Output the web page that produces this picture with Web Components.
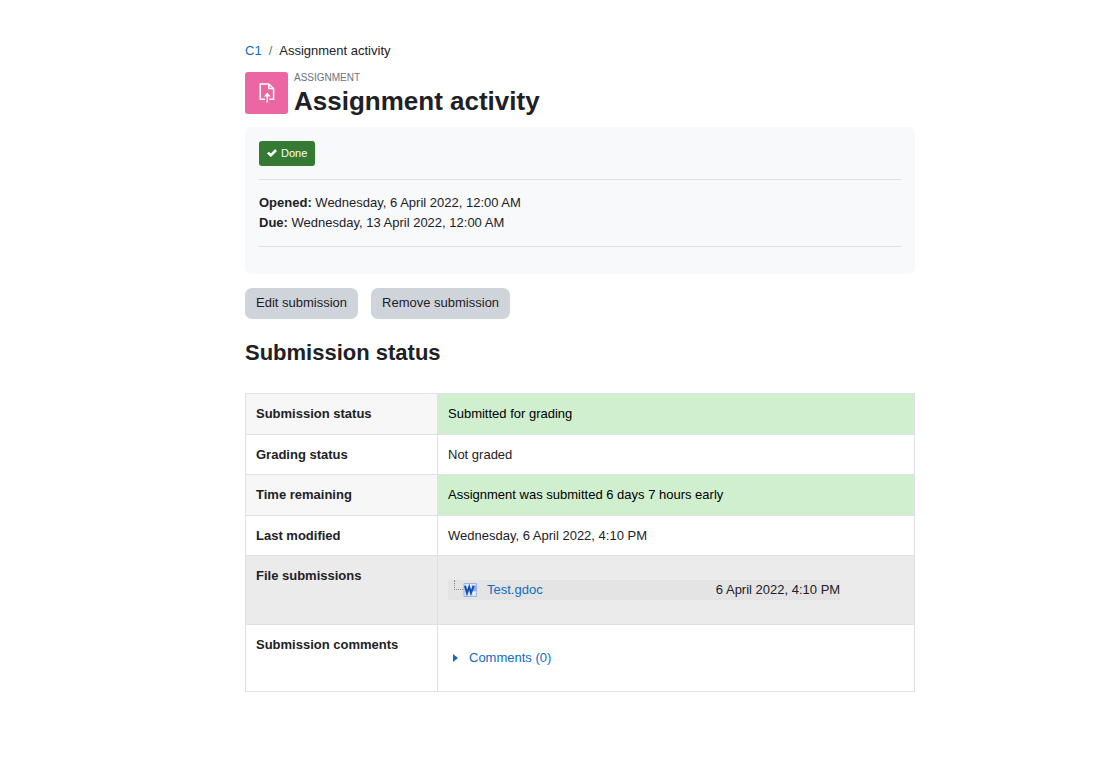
<!DOCTYPE html>
<html lang="en">
<head>
<meta charset="utf-8">
<title>C1: Assignment activity</title>
<meta name="viewport" content="width=device-width, initial-scale=1">
<style>
body {
  margin: 0;
  background: #fff;
  color: #1d2125;
  font: 13px/20px "Liberation Sans", Arial, sans-serif;
}
</style>
</head>
<body>
<activity-page>
  <bread-crumb parent="C1">Assignment activity</bread-crumb>
  <activity-header type="ASSIGNMENT">Assignment activity</activity-header>
  <activity-info>
    <completion-button slot="completion">Done</completion-button>
    <activity-date label="Opened:">Wednesday, 6 April 2022, 12:00 AM</activity-date>
    <activity-date label="Due:">Wednesday, 13 April 2022, 12:00 AM</activity-date>
  </activity-info>
  <submission-actions>
    <action-button>Edit submission</action-button>
    <action-button>Remove submission</action-button>
  </submission-actions>
  <submission-status heading="Submission status">
    <span slot="status">Submitted for grading</span>
    <span slot="grading">Not graded</span>
    <span slot="remaining">Assignment was submitted 6 days 7 hours early</span>
    <span slot="modified">Wednesday, 6 April 2022, 4:10 PM</span>
    <file-entry slot="files" date="6 April 2022, 4:10 PM">Test.gdoc</file-entry>
    <comment-toggle slot="comments">Comments (0)</comment-toggle>
  </submission-status>
</activity-page>

<script>
function make_template(html) {
  const template = document.createElement('template');
  template.innerHTML = html;
  return template;
}

class BaseElement extends HTMLElement {
  constructor() {
    super();
    this.attachShadow({ mode: 'open' });
    this.shadowRoot.appendChild(this.constructor.template.content.cloneNode(true));
  }

  // copy an attribute of the host into a node of the shadow root
  fill(selector, name) {
    this.shadowRoot.querySelector(selector).textContent = this.getAttribute(name) || '';
  }
}

class ActivityPage extends BaseElement {
  static template = make_template(/*html*/ `
<style>
:host {
  display: block;
  padding: 41px 185px 64px 245px;
}
</style>
<main><slot></slot></main>`);
}
customElements.define('activity-page', ActivityPage);

class BreadCrumb extends BaseElement {
  static template = make_template(/*html*/ `
<style>
:host {
  display: block;
}
ol {
  display: flex;
  gap: 7px;
  list-style: none;
  margin: 0;
  padding: 0;
}
a {
  color: #0f6cbf;
  text-decoration: none;
}
.divider {
  color: #6a737b;
}
</style>
<nav aria-label="Breadcrumb">
  <ol>
    <li><a href="#"></a></li>
    <li class="divider" aria-hidden="true">/</li>
    <li><slot></slot></li>
  </ol>
</nav>`);

  connectedCallback() {
    this.fill('a', 'parent');
  }
}
customElements.define('bread-crumb', BreadCrumb);

class ActivityHeader extends BaseElement {
  static template = make_template(/*html*/ `
<style>
:host {
  display: flex;
  align-items: center;
  gap: 6px;
  margin: 9px 0 11px;
}
.icon {
  display: flex;
  align-items: center;
  justify-content: center;
  width: 43px;
  height: 42px;
  border-radius: 3px;
  background: #eb66a2;
}
.type {
  color: #6a737b;
  font-size: 10px;
  line-height: 16px;
}
h1 {
  margin: 0;
  font-size: 26px;
  line-height: 30px;
}
</style>
<div class="icon">
  <svg width="20" height="20" viewBox="0 0 20 20" fill="none" stroke="#fff" stroke-width="1.5" aria-hidden="true">
    <path d="M8 16.3H3.2V.9H11.8L16.6 5.5V16.3H12.4"/>
    <path d="M11.8 .9V5.5H16.6"/>
    <path d="M10.3 19.5V12"/>
    <path d="M6.9 13.5L10.3 9.5L13.7 13.5Z" fill="#fff" stroke="none"/>
  </svg>
</div>
<div>
  <div class="type"></div>
  <h1><slot></slot></h1>
</div>`);

  connectedCallback() {
    this.fill('.type', 'type');
  }
}
customElements.define('activity-header', ActivityHeader);

class ActivityInfo extends BaseElement {
  static template = make_template(/*html*/ `
<style>
:host {
  display: block;
  padding: 14px 14px 27px;
  border-radius: 7px;
  background: #f8f9fb;
}
.dates {
  margin-top: 13px;
  padding: 13px 0;
  border-top: 1px solid #dfe2e5;
  border-bottom: 1px solid #dfe2e5;
}
</style>
<slot name="completion"></slot>
<div class="dates"><slot></slot></div>`);
}
customElements.define('activity-info', ActivityInfo);

class CompletionButton extends BaseElement {
  static template = make_template(/*html*/ `
<style>
:host {
  display: flex;
}
button {
  display: flex;
  align-items: center;
  gap: 4px;
  padding: 2px 8px 3px;
  border: 0;
  border-radius: 3px;
  background: #357a32;
  color: #fff;
  font: inherit;
  font-size: 11px;
}
</style>
<button type="button">
  <svg width="10" height="8" viewBox="0 0 10 8" fill="none" stroke="#fff" stroke-width="2.6" aria-hidden="true">
    <path d="M.9 3.6L3.8 6.3L9.1 1"/>
  </svg>
  <slot></slot>
</button>`);
}
customElements.define('completion-button', CompletionButton);

class ActivityDate extends BaseElement {
  static template = make_template(/*html*/ `
<style>
:host {
  display: block;
}
</style>
<strong></strong> <slot></slot>`);

  connectedCallback() {
    this.fill('strong', 'label');
  }
}
customElements.define('activity-date', ActivityDate);

class SubmissionActions extends BaseElement {
  static template = make_template(/*html*/ `
<style>
:host {
  display: flex;
  flex-wrap: wrap;
  gap: 13px;
  margin: 14px 0 20px;
}
</style>
<slot></slot>`);
}
customElements.define('submission-actions', SubmissionActions);

class ActionButton extends BaseElement {
  static template = make_template(/*html*/ `
<style>
:host {
  display: block;
}
button {
  display: block;
  padding: 5px 11px 6px;
  border: 0;
  border-radius: 7px;
  background: #ced4da;
  color: #1d2125;
  font: inherit;
}
</style>
<button type="button"><slot></slot></button>`);
}
customElements.define('action-button', ActionButton);

class SubmissionStatus extends BaseElement {
  static template = make_template(/*html*/ `
<style>
:host {
  display: block;
}
h2 {
  margin: 0 0 27px;
  font-size: 22px;
  line-height: 27px;
}
table {
  width: 100%;
  border-collapse: collapse;
}
th, td {
  padding: 10px;
  border: 1px solid #dee2e6;
  text-align: left;
  vertical-align: top;
}
th {
  width: 171px;
}
tr:nth-child(odd) {
  background: #f7f7f7;
}
tr:nth-child(even) > * {
  padding-bottom: 9px;
}
tr.files {
  background: #ebebeb;
}
.good {
  background: #cfefcf;
  color: #000;
}
</style>
<h2></h2>
<table>
  <tbody>
    <tr><th scope="row">Submission status</th><td class="good"><slot name="status"></slot></td></tr>
    <tr><th scope="row">Grading status</th><td><slot name="grading"></slot></td></tr>
    <tr><th scope="row">Time remaining</th><td class="good"><slot name="remaining"></slot></td></tr>
    <tr><th scope="row">Last modified</th><td><slot name="modified"></slot></td></tr>
    <tr class="files"><th scope="row">File submissions</th><td><slot name="files"></slot></td></tr>
    <tr><th scope="row">Submission comments</th><td><slot name="comments"></slot></td></tr>
  </tbody>
</table>`);

  connectedCallback() {
    this.fill('h2', 'heading');
  }
}
customElements.define('submission-status', SubmissionStatus);

class FileEntry extends BaseElement {
  static template = make_template(/*html*/ `
<style>
:host {
  display: flex;
  align-items: center;
  width: 86%;
  margin: 14px 0;
  background: #e4e4e4;
}
.branch {
  align-self: flex-start;
  box-sizing: border-box;
  width: 9px;
  height: 10px;
  margin-left: 6px;
  border-left: 1px dotted #888;
  border-bottom: 1px dotted #888;
}
a {
  margin-left: 10px;
  color: #0f6cbf;
  text-decoration: none;
}
.date {
  margin-left: auto;
}
</style>
<span class="branch"></span>
<svg width="14" height="14" viewBox="0 0 14 14" aria-hidden="true">
  <path d="M1 .5H13.5V13.5H1Z" fill="#dce9fa" stroke="#8eaee0" stroke-width=".9"/>
  <path d="M9 2.5H13V8H9Z" fill="#8fb0e6"/>
  <path d="M2 2.8L4 10L6.2 4L8 10L10.6 2.8" fill="none" stroke="#1551b5" stroke-width="2.1"/>
  <path d="M13.9 9H9.5V13.9Z" fill="#fff" stroke="#a5bce0" stroke-width=".5"/>
</svg>
<a href="#"><slot></slot></a>
<span class="date"></span>`);

  connectedCallback() {
    this.fill('.date', 'date');
  }
}
customElements.define('file-entry', FileEntry);

class CommentToggle extends BaseElement {
  static template = make_template(/*html*/ `
<style>
:host {
  display: block;
  padding: 13px 0 14px;
}
a {
  display: flex;
  align-items: center;
  gap: 11px;
  padding-left: 5px;
  color: #0f6cbf;
  text-decoration: none;
}
</style>
<a href="#">
  <svg width="5" height="8" viewBox="0 0 5 8" aria-hidden="true"><path d="M0 0L5 4L0 8Z" fill="#0f6cbf"/></svg>
  <slot></slot>
</a>`);
}
customElements.define('comment-toggle', CommentToggle);
</script>
</body>
</html>
